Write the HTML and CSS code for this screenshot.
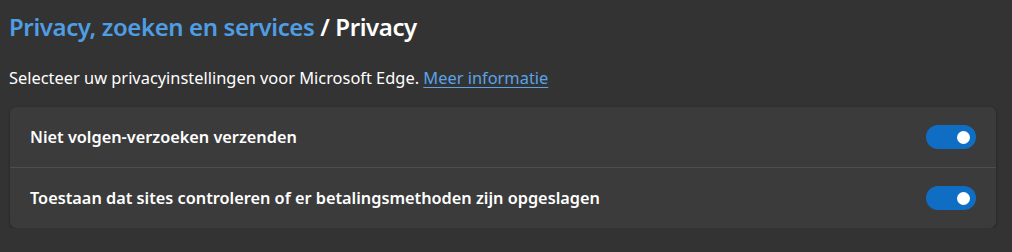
FILE: index.html
```html
<!DOCTYPE html>
<html lang="nl">
<head>
<meta charset="utf-8">
<title>Privacy</title>
<link rel="stylesheet" href="styles.css">
</head>
<body>
<main class="page">
  <h1 class="crumbs"><a class="crumb-link" href="#">Privacy, zoeken en services</a><span class="sep"> / </span><span class="current">Privacy</span></h1>
  <p class="desc">Selecteer uw privacyinstellingen voor Microsoft Edge. <a class="link" href="#">Meer informatie</a></p>
  <section class="card">
    <div class="row">
      <span class="label">Niet volgen-verzoeken verzenden</span>
      <span class="toggle on"><span class="thumb"></span></span>
    </div>
    <div class="row">
      <span class="label">Toestaan dat sites controleren of er betalingsmethoden zijn opgeslagen</span>
      <span class="toggle on"><span class="thumb"></span></span>
    </div>
  </section>
</main>
</body>
</html>
```
FILE: styles.css
```css
html, body {
  margin: 0;
  background: #333333;
  color: #ffffff;
  font-family: "Segoe UI", "Noto Sans", "Open Sans", sans-serif;
}
.page {
  padding: 11px 16px 0 9px;
}
.crumbs {
  margin: 0;
  font-size: 24px;
  font-weight: 600;
  line-height: 32px;
  letter-spacing: -0.4px;
}
.crumb-link {
  color: #4f9de3;
  text-decoration: none;
}
.sep, .current {
  color: #ffffff;
}
.desc {
  margin: 24px 0 0;
  font-size: 16.4px;
  line-height: 22px;
  color: #ffffff;
}
.link {
  color: #5aa3e6;
  text-decoration: underline;
  text-underline-offset: 3px;
}
.card {
  margin: 18px 0 0 1px;
  background: #3b3b3b;
  border-radius: 6px;
  box-shadow: 0 1px 3px rgba(0,0,0,0.35);
  width: 986px;
}
.row {
  display: flex;
  align-items: center;
  justify-content: space-between;
  height: 60px;
  padding: 0 20px 0 20px;
}
.row + .row {
  border-top: 1px solid #4e4e4e;
}
.label {
  font-size: 16.3px;
  font-weight: 600;
}
.toggle {
  display: flex;
  align-items: center;
  justify-content: flex-end;
  width: 50px;
  height: 24px;
  border-radius: 12px;
  background: #0f6ec4;
  padding: 0 6px;
  box-sizing: border-box;
}
.thumb {
  width: 13px;
  height: 13px;
  border-radius: 50%;
  background: #ffffff;
}
```
